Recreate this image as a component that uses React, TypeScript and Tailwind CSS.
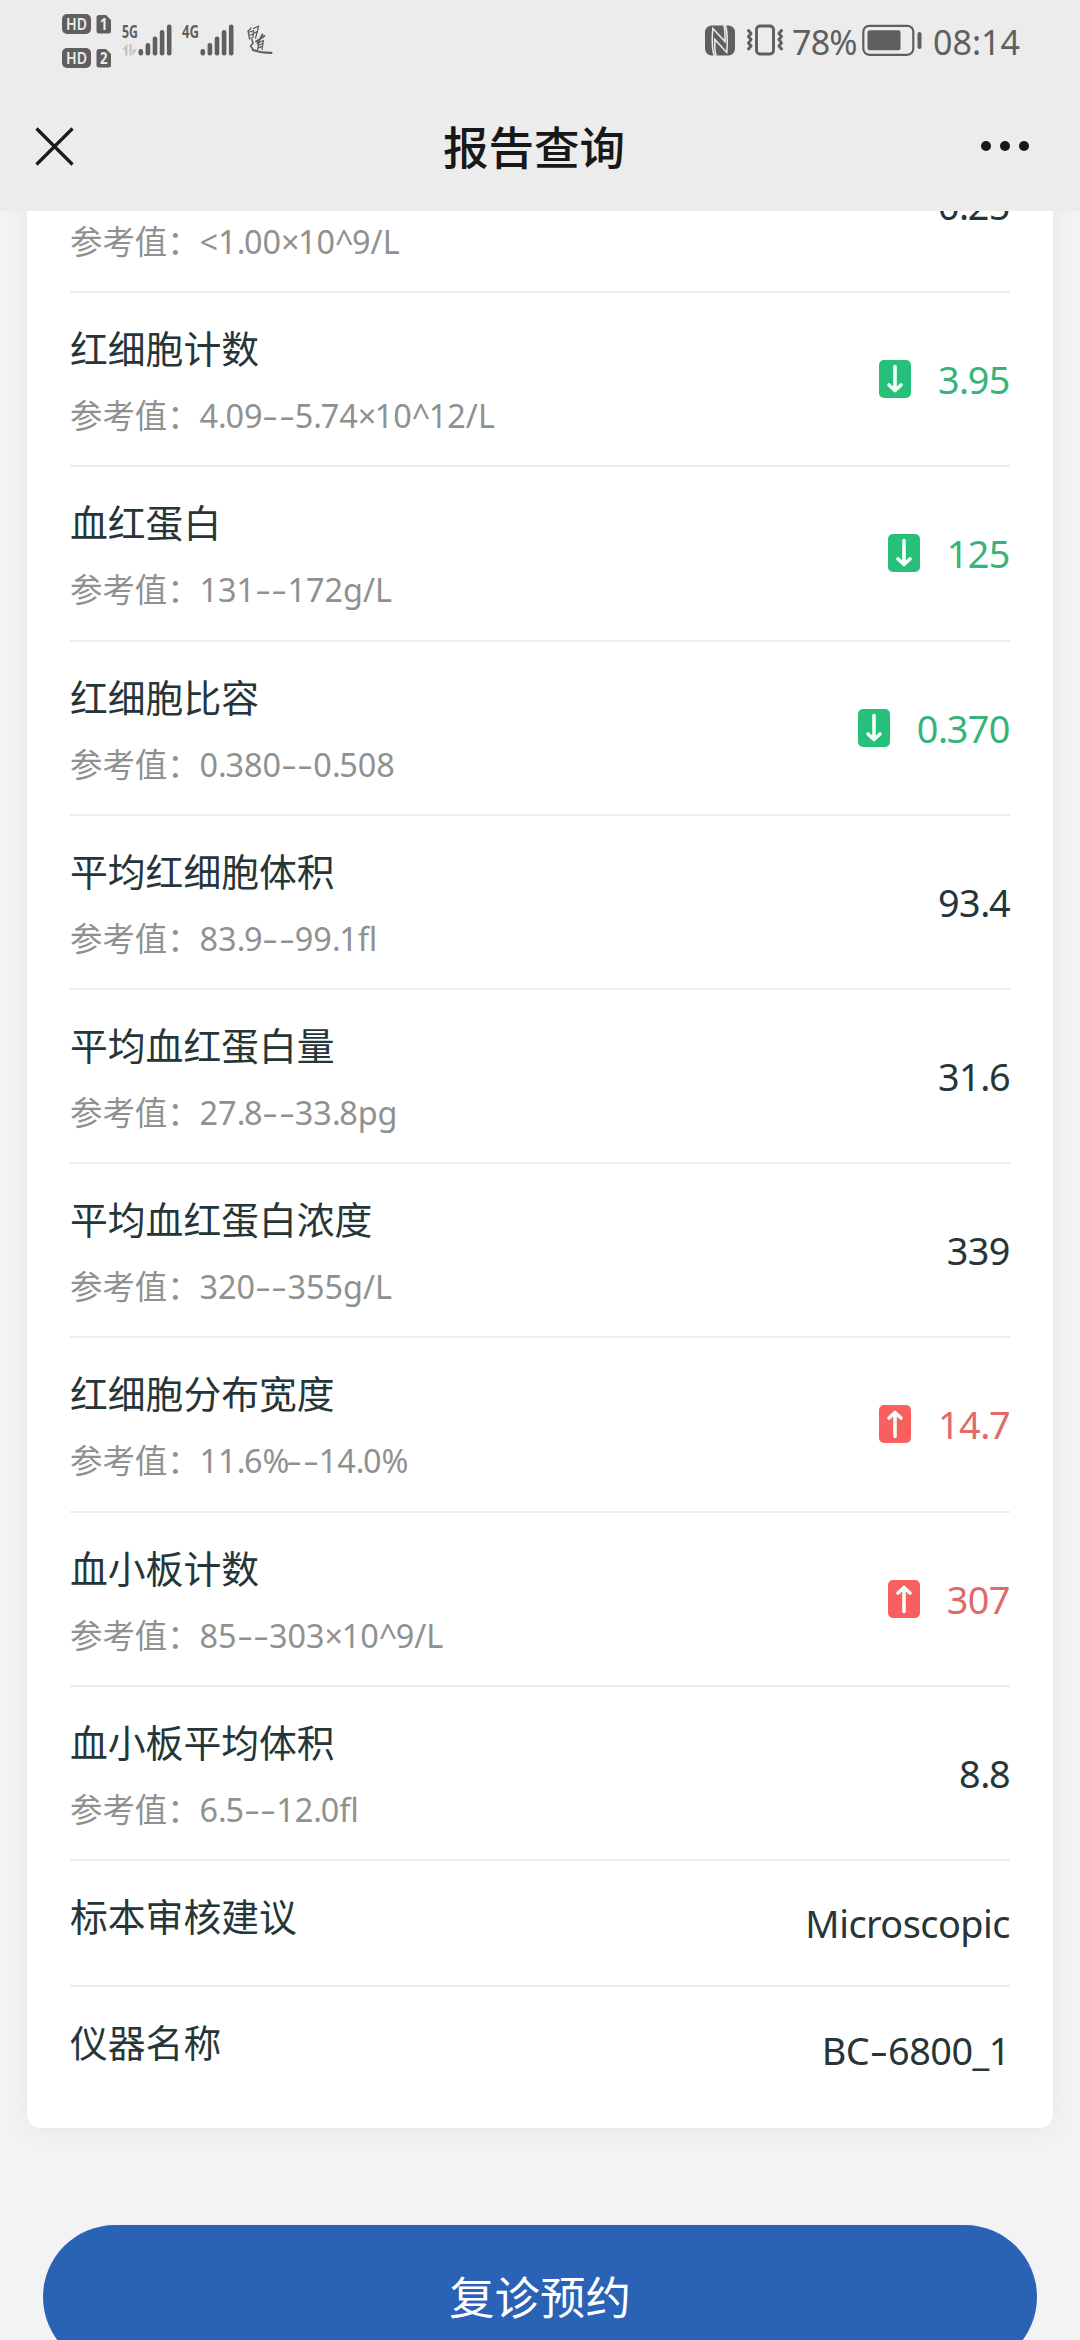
type Flag = "low" | "high";

interface ReportItem {
  name?: string;
  range?: string;
  value: string;
  flag?: Flag;
}

const ITEMS: ReportItem[] = [
  { range: "<1.00×10^9/L", value: "0.25" },
  { name: "红细胞计数", range: "4.09--5.74×10^12/L", value: "3.95", flag: "low" },
  { name: "血红蛋白", range: "131--172g/L", value: "125", flag: "low" },
  { name: "红细胞比容", range: "0.380--0.508", value: "0.370", flag: "low" },
  { name: "平均红细胞体积", range: "83.9--99.1fl", value: "93.4" },
  { name: "平均血红蛋白量", range: "27.8--33.8pg", value: "31.6" },
  { name: "平均血红蛋白浓度", range: "320--355g/L", value: "339" },
  { name: "红细胞分布宽度", range: "11.6%--14.0%", value: "14.7", flag: "high" },
  { name: "血小板计数", range: "85--303×10^9/L", value: "307", flag: "high" },
  { name: "血小板平均体积", range: "6.5--12.0fl", value: "8.8" },
  { name: "标本审核建议", value: "Microscopic" },
  { name: "仪器名称", value: "BC-6800_1" },
];

const VALUE_COLOR: Record<Flag, string> = {
  low: "text-[#35b47c]",
  high: "text-[#e0696a]",
};

const LATIN = "font-['Noto_Sans','Noto_Sans_CJK_SC',sans-serif]";

// dashes are drawn wide, symbols slightly tighter than digits
const GLYPH_CLASS: Record<string, string> = {
  "-": "inline-block w-[0.5em] scale-x-150 text-center",
  ".": "tracking-[-1.4px]",
  "×": "tracking-[-1.5px]",
  "^": "tracking-[-1.5px]",
  "%": "tracking-[-3px]",
};

function Latin({ text }: { text: string }) {
  return text.split(/([-.×^%])/).map((part, i) =>
    GLYPH_CLASS[part] ? (
      <span key={i} className={GLYPH_CLASS[part]}>
        {part}
      </span>
    ) : (
      part
    ),
  );
}

function SimBadge({ n }: { n: string }) {
  return (
    <svg className="overflow-visible" width="49" height="20" viewBox="0 0 49 20">
      <rect width="29" height="20" rx="5" fill="#5f5f5f" />
      <text x="4" y="15.6" textLength="21" lengthAdjust="spacingAndGlyphs" fontSize="16" fontWeight="600" fill="#ececec">
        HD
      </text>
      <path d="M37 1h7l5 5v11a2.5 2.5 0 0 1-2.5 2.5H37a2.5 2.5 0 0 1-2.5-2.5V3.500A2.5 2.5 0 0 1 37 1z" fill="#5f5f5f" />
      <text x="38" y="16" textLength="7.5" lengthAdjust="spacingAndGlyphs" fontSize="16" fontWeight="700" fill="#ececec">
        {n}
      </text>
    </svg>
  );
}

function Signal({ label, data }: { label: string; data?: boolean }) {
  const tops = [25, 19, 12.5, 6, 0.5];
  const start = data ? 16.5 : 18.5;
  return (
    <svg className="overflow-visible" width="51" height="32" viewBox="0 0 51 32">
      <text x="0" y="14" textLength={data ? 16 : 17} lengthAdjust="spacingAndGlyphs" fontSize="18.5" fontWeight="700" fill="#5f5f5f">
        {label}
      </text>
      {data && <path d="M0 25.5 5.5 20v11.500H3v-6zM7.5 20h2.200v11.500H7.500zM10.5 31.500V20v5.500h4.500z" fill="#c4c4c4" />}
      {tops.map((top, i) => (
        <rect key={top} x={start + i * 7.1} y={top} width="4.6" height={31.5 - top} rx="2.2" fill="#5f5f5f" />
      ))}
    </svg>
  );
}

// carrier mark in brush script
function Brush() {
  return (
    <svg width="27" height="32" viewBox="0 0 27 32" fill="none" stroke="#5f5f5f" strokeWidth="1.3" strokeLinecap="round" strokeLinejoin="round">
      <path d="M5 4 2 7.5M2 7l1.500 8M2.500 8.500l5-2-.5 7-3.500 1M3 11.500l4-1.500M7.500 4.500 12.500 2 11.500 7l-2 7M7.500 9.500l3.500-2" />
      <path d="M6 15.500l1 4-2.500 2.500 3 4" strokeWidth="1.6" />
      <path d="M10 17.500 18.500 12M16.500 10.500l-5 9" strokeWidth="1.9" />
      <path d="M13 18l-1.500 8M13 18.500l4.500-2-1.500 9M13 21l3.500-1.500M12.500 23.800l3.500-1.500" />
      <path d="M7 26c5 2 11 3 18.500 2.800" strokeWidth="2.2" />
    </svg>
  );
}

function Nfc() {
  return (
    <svg width="30" height="31" viewBox="0 0 30 31">
      <rect y="0.5" width="30" height="30" rx="6.5" fill="#5f5f5f" />
      <path
        d="M9.3 31C7.2 25 7 13 7.8 3.5L20 16.5V10C20 6 19.7 3 18.8 0M20.5 0c1.8 6 2 18 1.3 27.500L9.8 14.500V21c0 4 .3 7 1.200 10"
        fill="none"
        stroke="#ececec"
        strokeWidth="1.5"
      />
    </svg>
  );
}

function Vibrate() {
  return (
    <svg width="38" height="32" viewBox="0 0 38 32" fill="none" stroke="#5f5f5f" strokeWidth="2.9" strokeLinejoin="round" strokeLinecap="round">
      <rect x="10.5" y="2" width="17" height="28" rx="3.5" />
      <path d="M2.5 6.5l2.500 3-2.500 3 2.500 3-2.500 3.500 2.500 3-2.500 3M35.500 6.500l-2.500 3 2.500 3-2.500 3 2.500 3.500-2.500 3 2.500 3" />
    </svg>
  );
}

function Battery() {
  return (
    <svg width="60" height="32" viewBox="0 0 60 32">
      <rect x="1.3" y="1.8" width="50" height="29" rx="6" fill="none" stroke="#5f5f5f" strokeWidth="2.2" />
      <rect x="5.5" y="6.3" width="33" height="20" rx="2" fill="#5f5f5f" />
      <rect x="55.5" y="8" width="4" height="17" rx="2" fill="#5f5f5f" />
    </svg>
  );
}

function StatusBar() {
  return (
    <div className="flex h-20 items-center text-[34px] text-[#5f5f5f]">
      <div className="ml-[62px] flex flex-col gap-3.5 pt-px">
        <SimBadge n="1" />
        <SimBadge n="2" />
      </div>
      <div className="ml-[11px] flex gap-[9px]">
        <Signal label="5G" data />
        <Signal label="4G" />
      </div>
      <div className="ml-[13px]">
        <Brush />
      </div>
      <div className="mr-[62px] ml-auto flex items-center">
        <Nfc />
        <div className="ml-[11px]">
          <Vibrate />
        </div>
        <span className="ml-2 w-[64px] pt-1 leading-8 tracking-[-0.8px]">78%</span>
        <div className="ml-1.5">
          <Battery />
        </div>
        <span className="ml-[11px] w-[85px] pt-1 leading-8">08:14</span>
      </div>
    </div>
  );
}

function TitleBar() {
  return (
    <div className="flex h-[131px] items-center justify-between pt-px pr-[50px] pl-[35px]">
      <svg width="39" height="39" viewBox="0 0 39 39" stroke="#1a1a1a" strokeWidth="3.2">
        <path d="M1.5 1.5l36 36M37.5 1.5l-36 36" />
      </svg>
      <h1 className="mt-0.5 ml-3.5 text-[45.5px] font-medium text-[#181818]">报告查询</h1>
      <svg width="50" height="12" viewBox="0 0 50 12" fill="#181818">
        <circle cx="6" cy="6" r="5" />
        <circle cx="25" cy="6" r="5" />
        <circle cx="44" cy="6" r="5" />
      </svg>
    </div>
  );
}

function FlagIcon({ flag }: { flag: Flag }) {
  const low = flag === "low";
  return (
    <svg width="32" height="38" viewBox="0 0 32 38">
      <rect width="32" height="38" rx="5" fill={low ? "#26c07b" : "#fa5f60"} />
      <path
        d={low ? "M16 6.5v24M10 25 16 30.5 22 25" : "M16 31.5v-24M10 13 16 7.5 22 13"}
        fill="none"
        stroke="#f4fffa"
        strokeWidth="3.6"
        strokeLinecap="round"
        strokeLinejoin="round"
      />
    </svg>
  );
}

function ReportRow({ item }: { item: ReportItem }) {
  const { name, range, value, flag } = item;
  return (
    <li
      className={`flex justify-between border-b-2 border-[#ededee] last:border-b-0 ${range ? "h-[174.2px]" : "h-[126px]"}`}
    >
      <div className="pt-[23px]">
        <p className="h-[66px] text-[37.8px] leading-[66px] text-[#263638]">{name}</p>
        {range && (
          <p className="flex text-[32.4px] leading-[66px] text-[#8f9191]">
            <span>参考值：</span>
            <span className={LATIN}>
              <Latin text={range} />
            </span>
          </p>
        )}
      </div>
      <div className={`flex items-center gap-[27px] ${flag ? VALUE_COLOR[flag] : "text-[#263638]"}`}>
        {flag && <FlagIcon flag={flag} />}
        <span className={`pt-0.5 text-[37.8px] leading-[50px] tracking-[-0.5px] ${LATIN}`}>
          <Latin text={value} />
        </span>
      </div>
    </li>
  );
}

export default function App() {
  return (
    <div className="flex h-[2340px] w-[1080px] flex-col overflow-hidden bg-[#f3f3f5] font-['Noto_Sans','Noto_Sans_CJK_SC',sans-serif]">
      <header className="h-[211px] shrink-0 bg-[#ececec]">
        <StatusBar />
        <TitleBar />
      </header>
      <main className="flex-1 overflow-hidden">
        {/* list is scrolled, so the first row sits partly under the header */}
        <ul className="mx-[27px] -mt-[92px] h-[2009px] rounded-[14px] bg-white px-[43px] shadow-[0_2px_26px_rgba(0,0,0,0.06)]">
          {ITEMS.map((item) => (
            <ReportRow key={item.value} item={item} />
          ))}
        </ul>
        <button className="mx-[43px] mt-[97px] flex h-36 w-[994px] items-center justify-center rounded-full bg-[#2a62b6] text-[45.4px] text-white">
          复诊预约
        </button>
      </main>
    </div>
  );
}
